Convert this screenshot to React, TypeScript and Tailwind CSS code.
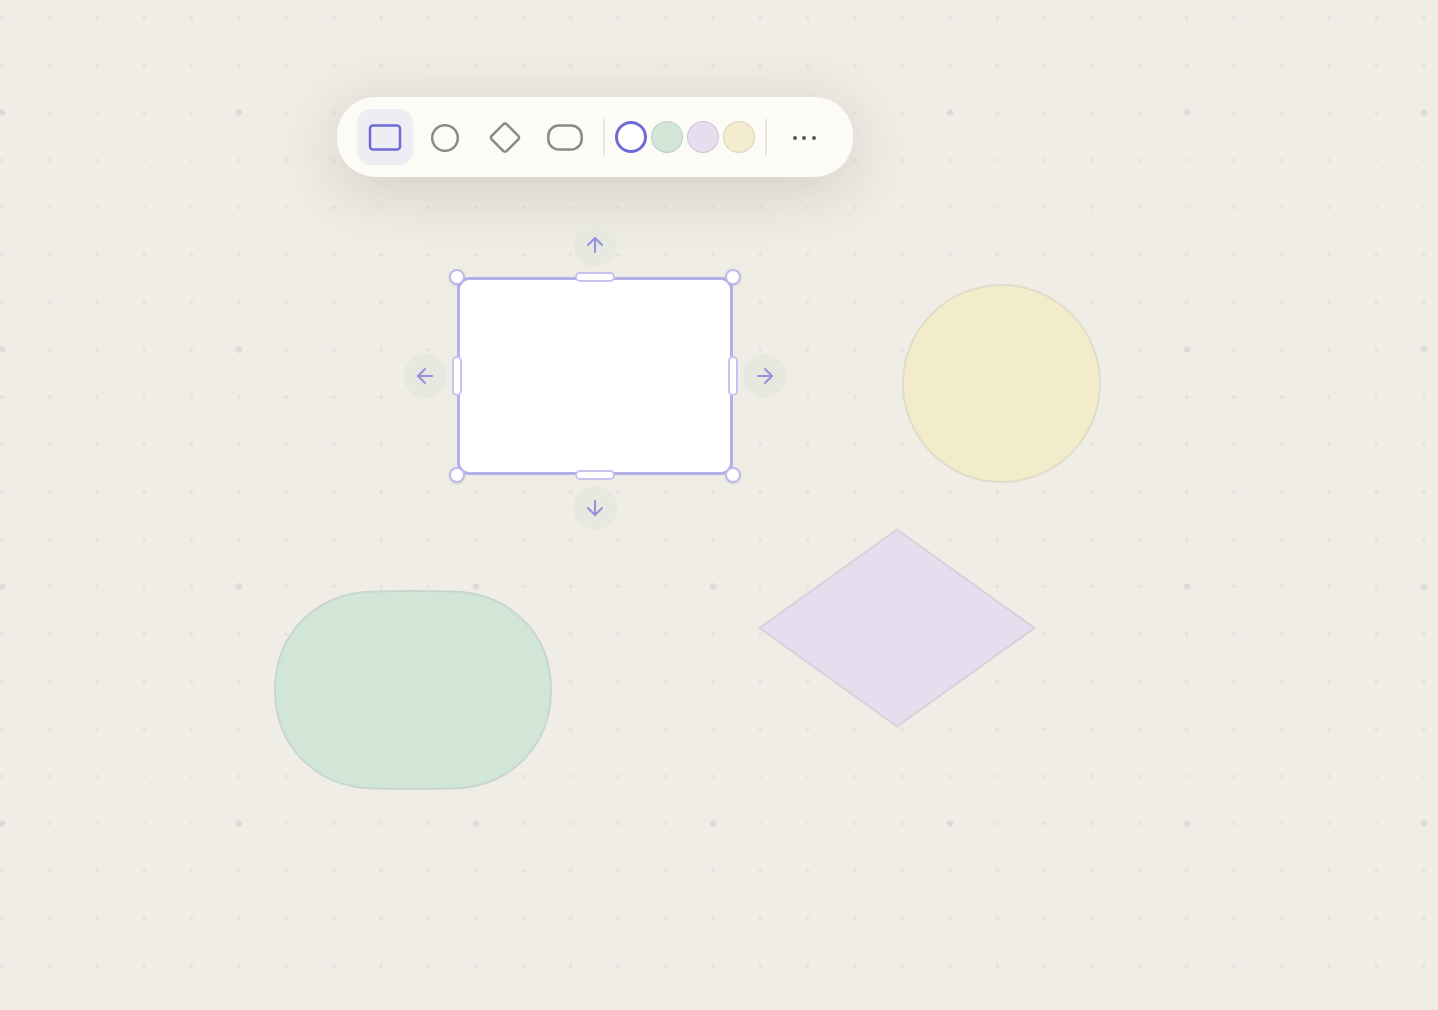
import { ArrowDown, ArrowLeft, ArrowRight, ArrowUp } from "lucide-react";

const swatches = ["bg-[#d2e6d8]", "bg-[#e4deef]", "bg-[#f3ecce]"];

function Divider() {
  return <div className="mx-2.5 h-9 w-0.5 bg-[#e7e5de]" />;
}

// Toolbar with shape pickers and the colour row
function Toolbar() {
  return (
    <div className="absolute left-[337px] top-[97px] flex h-20 w-[516px] items-center rounded-[38px] bg-[#fcfbf6] pl-5 shadow-[0_12px_64px_rgba(60,55,40,0.18)]">
      <div className="flex gap-1">
        <button className="flex h-14 w-14 items-center justify-center rounded-[14px] bg-[#efedf4]">
          <svg width="40" height="40" viewBox="0 0 40 40" fill="none" stroke="#6f6bd6" strokeWidth="2.5">
            <rect x="5" y="8.5" width="30" height="24" rx="3" />
          </svg>
        </button>
        <button className="flex h-14 w-14 items-center justify-center">
          <svg width="40" height="40" viewBox="0 0 40 40" fill="none" stroke="#8a8a87" strokeWidth="2.5">
            <circle cx="20" cy="21" r="12.8" />
          </svg>
        </button>
        <button className="flex h-14 w-14 items-center justify-center">
          <svg width="40" height="40" viewBox="0 0 40 40" fill="none" stroke="#8a8a87" strokeWidth="2.5" strokeLinejoin="round">
            <path d="M18.200 7.300a2.500 2.500 0 0 1 3.600 0l11.500 11.500a2.500 2.500 0 0 1 0 3.600l-11.500 11.500a2.500 2.500 0 0 1-3.600 0l-11.500-11.500a2.500 2.500 0 0 1 0-3.600z" />
          </svg>
        </button>
        <button className="flex h-14 w-14 items-center justify-center">
          <svg width="40" height="40" viewBox="0 0 40 40" fill="none" stroke="#8a8a87" strokeWidth="2.5">
            <rect x="3.300" y="8.500" width="33.400" height="24" rx="10.500" />
          </svg>
        </button>
      </div>
      <Divider />
      <div className="flex gap-1">
        <button className="h-8 w-8 rounded-full border-[3px] border-[#6f6bd6] bg-white" />
        {swatches.map((s) => (
          <button key={s} className={`h-8 w-8 rounded-full border border-black/10 ${s}`} />
        ))}
      </div>
      <Divider />
      <button className="-ml-px flex h-14 w-14 items-center justify-center gap-[5.5px] pt-0.5">
        <span className="h-1 w-1 rounded-full bg-[#555552]" />
        <span className="h-1 w-1 rounded-full bg-[#555552]" />
        <span className="h-1 w-1 rounded-full bg-[#555552]" />
      </button>
    </div>
  );
}

function Corner({ className }: { className: string }) {
  return <div className={`absolute h-4 w-4 rounded-full border-2 border-[#bdbaee] bg-white shadow-sm ${className}`} />;
}

function Nudge({ className, children }: { className: string; children: React.ReactNode }) {
  return (
    <button className={`absolute flex h-11 w-11 items-center justify-center rounded-full bg-[#e7e8df] text-[#9390dc] ${className}`}>
      {children}
    </button>
  );
}

// Selected node, box is 276x198 like the other shapes
function SelectedNode() {
  return (
    <div className="absolute left-[457px] top-[277px] h-[198px] w-[276px]">
      <div className="h-full w-full rounded-xl border-[3px] border-[#b3b0e8] bg-white" />
      <Corner className="-left-2 -top-2" />
      <Corner className="-right-2 -top-2" />
      <Corner className="-bottom-2 -left-2" />
      <Corner className="-bottom-2 -right-2" />
      <div className="absolute left-[118px] -top-[5px] h-2.5 w-10 rounded-full border-2 border-[#c5c3f0] bg-white" />
      <div className="absolute left-[118px] -bottom-[5px] h-2.5 w-10 rounded-full border-2 border-[#c5c3f0] bg-white" />
      <div className="absolute -left-[5px] top-[79px] h-10 w-2.5 rounded-full border-2 border-[#c5c3f0] bg-white" />
      <div className="absolute -right-[5px] top-[79px] h-10 w-2.5 rounded-full border-2 border-[#c5c3f0] bg-white" />
      <Nudge className="left-[116px] -top-[54px]">
        <ArrowUp size={24} strokeWidth={2} />
      </Nudge>
      <Nudge className="left-[116px] -bottom-[55px]">
        <ArrowDown size={24} strokeWidth={2} />
      </Nudge>
      <Nudge className="-left-[54px] top-[77px]">
        <ArrowLeft size={24} strokeWidth={2} />
      </Nudge>
      <Nudge className="-right-[54px] top-[77px]">
        <ArrowRight size={24} strokeWidth={2} />
      </Nudge>
    </div>
  );
}

export default function App() {
  return (
    <div className="relative h-[1010px] w-full overflow-hidden bg-[#f0ede6] bg-[radial-gradient(circle,#dddbd5_3px,transparent_3.5px),radial-gradient(circle,#e4e2dc_1.5px,transparent_2px)] bg-[size:237px_237px,47.4px_47.4px] bg-[position:-116.5px_-6px,-21.7px_-5.7px]">
      <Toolbar />
      <SelectedNode />

      <div className="absolute left-[901.5px] top-[283.5px] h-[199px] w-[199px] rounded-full border-2 border-[#dfdcc9] bg-[#f3ecca]" />

      <svg className="absolute left-[275px] top-[591px] overflow-visible" width="276" height="198" viewBox="0 0 276 198" fill="#d2e6d8" stroke="#c9d6cc" strokeWidth="2">
        <path d="M0 99C0 42 42 1 100 0.500C125 0 151 0 176 0.500C234 1 276 42 276 99C276 156 234 197 176 197.500C151 198 125 198 100 197.500C42 197 0 156 0 99Z" />
      </svg>

      <svg className="absolute left-[759px] top-[529px] overflow-visible" width="276" height="198" viewBox="0 0 276 198" fill="#e4deef" stroke="#d6d2da" strokeWidth="2">
        <path d="M138 0.500L275.500 99L138 197.500L0.500 99Z" />
      </svg>
    </div>
  );
}
